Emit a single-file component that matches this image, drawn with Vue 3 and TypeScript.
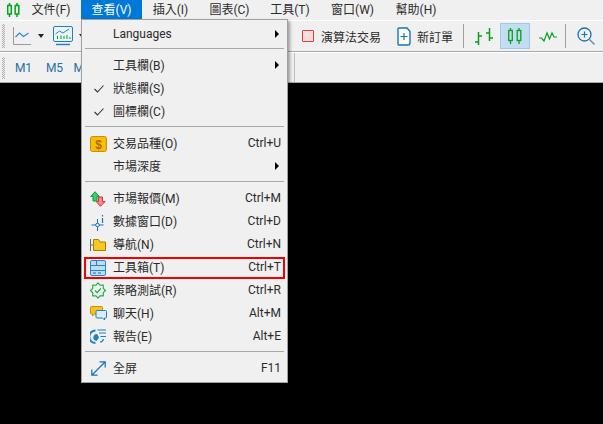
<script setup lang="ts">
type Item = { kind: 'item'; label: string; key?: string; sub?: boolean; check?: boolean; icon?: string; hl?: boolean } | { kind: 'sep' };
const menus = [
  { label: '文件(F)', w: 60 },
  { label: '查看(V)', w: 61, active: true },
  { label: '插入(I)', w: 57 },
  { label: '圖表(C)', w: 61 },
  { label: '工具(T)', w: 60 },
  { label: '窗口(W)', w: 65 },
  { label: '幫助(H)', w: 62 },
];
const items: Item[] = [
  { kind: 'item', label: 'Languages', sub: true },
  { kind: 'sep' },
  { kind: 'item', label: '工具欄(B)', sub: true },
  { kind: 'item', label: '狀態欄(S)', check: true },
  { kind: 'item', label: '圖標欄(C)', check: true },
  { kind: 'sep' },
  { kind: 'item', label: '交易品種(O)', key: 'Ctrl+U', icon: 'dollar' },
  { kind: 'item', label: '市場深度', sub: true },
  { kind: 'sep' },
  { kind: 'item', label: '市場報價(M)', key: 'Ctrl+M', icon: 'quotes' },
  { kind: 'item', label: '數據窗口(D)', key: 'Ctrl+D', icon: 'data' },
  { kind: 'item', label: '導航(N)', key: 'Ctrl+N', icon: 'nav' },
  { kind: 'item', label: '工具箱(T)', key: 'Ctrl+T', icon: 'box', hl: true },
  { kind: 'item', label: '策略測試(R)', key: 'Ctrl+R', icon: 'gear' },
  { kind: 'item', label: '聊天(H)', key: 'Alt+M', icon: 'chat' },
  { kind: 'item', label: '報告(E)', key: 'Alt+E', icon: 'report' },
  { kind: 'sep' },
  { kind: 'item', label: '全屏', key: 'F11', icon: 'full' },
];
</script>

<template>
  <div class="app">
    <div class="menubar">
      <svg class="logo" width="13" height="14" viewBox="0 0 13 14" fill="none" stroke="#00a51a" stroke-width="1.500">
        <path d="M2.500 0v14M10 0v14" />
        <rect x=".700" y="2.500" width="3.600" height="8.500" fill="#f0f0f0" />
        <rect x="8.200" y="2.500" width="3.600" height="8.500" fill="#f0f0f0" />
      </svg>
      <div v-for="m in menus" :key="m.label" class="mb" :class="{ on: m.active }" :style="{ width: m.w + 'px' }">{{ m.label }}</div>
    </div>

    <div class="tb1">
      <div class="grip"></div>
      <svg class="i1" width="18" height="18" viewBox="0 0 18 18" fill="none">
        <path d="M.500 0v17.500H18" stroke="#9a9a9a" />
        <path d="M2.500 10l4-4 4 3.500 5-3.500" stroke="#2a86c8" stroke-width="1.100" />
      </svg>
      <span class="arrow a1"></span>
      <svg class="i2" width="20" height="20" viewBox="0 0 20 20" fill="none">
        <rect x=".500" y=".500" width="19" height="15" rx="1.500" fill="#eaf4fb" stroke="#1e7ec2" />
        <path d="M3 18.500h14" stroke="#1e7ec2" stroke-width="1.400" />
        <path d="M2.500 8l4-3 3.500 2 6-4" stroke="#2a86c8" />
        <path d="M4.500 13v-3M8 13V9.500M11 13v-3M14 13V9M17 13v-2" stroke="#0a9e1e" />
      </svg>
      <span class="arrow a2"></span>
      <div class="tb-sp"></div>
      <span class="redbox"></span>
      <span class="tl t1">演算法交易</span>
      <svg class="i3" width="15" height="19" viewBox="0 0 15 19" fill="none">
        <path d="M1 2a1 1 0 0 1 1-1h8l3 3.500V16a2 2 0 0 1-2 2H2a1 1 0 0 1-1-1z" fill="#fff" stroke="#1673b6" stroke-width="1.400" stroke-linejoin="round" />
        <path d="M7 6v7M3.500 9.500h7" stroke="#1673b6" stroke-width="1.200" />
      </svg>
      <span class="tl t2">新訂單</span>
      <span class="vsep s1"></span>
      <svg class="i4" width="18" height="17" viewBox="0 0 18 17" fill="none" stroke="#0a9e1e" stroke-width="1.500">
        <path d="M3.500 4v13M0 14h3.500M3.500 8H7M14.500 0v13M11 5h3.500M14.500 10H18" />
      </svg>
      <div class="active">
        <svg width="14" height="16" viewBox="0 0 14 16" fill="none" stroke="#0a9e1e" stroke-width="1.300">
          <path d="M2.500 0v16M11 0v16" />
          <rect x=".700" y="2.500" width="3.600" height="10" fill="#c2dcf2" />
          <rect x="9.200" y="2.500" width="3.600" height="10" fill="#c2dcf2" />
        </svg>
      </div>
      <svg class="i5" width="18" height="12" viewBox="0 0 18 12" fill="none" stroke="#0a9e1e" stroke-width="1.200">
        <path d="M0 8h2.500l2.500 3 3-8 2.500 6 2.500-6 2 4H18" />
      </svg>
      <span class="vsep s2"></span>
      <svg class="i6" width="18" height="18" viewBox="0 0 18 18" fill="none" stroke="#1673b6">
        <circle cx="7.500" cy="7.500" r="6.500" stroke-width="1.300" />
        <path d="M7.500 4.500v6M4.500 7.500h6" stroke-width="1.200" />
        <path d="M12.500 12.500L17.500 17.500" stroke="#5c8fb5" stroke-width="1.400" />
      </svg>
    </div>

    <div class="tb2">
      <div class="grip g2"></div>
      <span class="tf">M1</span>
      <span class="tf">M5</span>
      <span class="tf">M15</span>
      <span class="vline"></span>
    </div>

    <div class="canvas"></div>

    <div class="menu">
      <template v-for="(it, i) in items" :key="i">
        <div v-if="it.kind === 'sep'" class="sep"></div>
        <div v-else class="row" :class="{ hl: it.hl, cjk: i > 0 }">
          <span class="ic">
            <svg v-if="it.check" class="chk" width="10" height="8" viewBox="0 0 10 8" fill="none" stroke="#333" stroke-width="1.100"><path d="M.500 4l3 3 6-6.500" /></svg>
            <svg v-else-if="it.icon === 'dollar'" width="17" height="16" viewBox="0 0 17 16">
              <rect x=".500" y=".500" width="16" height="15" rx="2" fill="#f9bd09" stroke="#c98f00" />
              <text x="8.500" y="12.500" text-anchor="middle" font-size="12" font-weight="700" fill="#a96f00" font-family="Liberation Sans">$</text>
            </svg>
            <svg v-else-if="it.icon === 'quotes'" width="16" height="16" viewBox="0 0 16 16" stroke-linejoin="round">
              <path d="M5 .700L9.300 5.500H7V10H3V5.500H.700z" fill="#3ecb6a" stroke="#0e9a3e" />
              <path d="M10.500 15.300L6.200 10.500H8.500V6h4v4.500h2.600z" fill="#f58a8e" stroke="#d8343c" />
            </svg>
            <svg v-else-if="it.icon === 'data'" width="16" height="18" viewBox="0 0 16 18" fill="none">
              <path d="M7.500 6v12M1.500 12h12" stroke="#1673b6" />
              <circle cx="7.500" cy="12" r="1.800" fill="#f0f0f0" stroke="#1673b6" />
              <path d="M12.500 2v1.500M12.500 5v5" stroke="#1673b6" stroke-width="1.200" />
            </svg>
            <svg v-else-if="it.icon === 'nav'" width="16" height="12" viewBox="0 0 16 12" fill="none">
              <path d="M.500 0v12" stroke="#666" />
              <path d="M1 6h2.500" stroke="#666" />
              <path d="M3.500 .500h5l1.500 2.500h5.500v8.500h-12z" fill="#f8c820" stroke="#a87f00" />
            </svg>
            <svg v-else-if="it.icon === 'box'" width="16" height="16" viewBox="0 0 16 16" fill="none">
              <rect x=".500" y=".500" width="15" height="15" rx="1.500" fill="#bcdcf4" stroke="#2a86c8" />
              <path d="M1 5.500h14M1 10.500h14M6.500 1v4.500" stroke="#2a86c8" />
              <path d="M3 13h3M8 13h3" stroke="#1673b6" />
            </svg>
            <svg v-else-if="it.icon === 'gear'" width="16" height="17" viewBox="0 0 17 17" fill="none">
              <path d="M16.500 8.500L14.040 10.800 14.160 14.160 10.800 14.040 8.500 16.500 6.200 14.040 2.840 14.160 2.960 10.800 .500 8.500 2.960 6.200 2.840 2.840 6.200 2.960 8.500 .500 10.800 2.960 14.160 2.840 14.040 6.200z" stroke="#1cab4a" stroke-width="1.200" stroke-linejoin="round" />
              <path d="M5.300 8.500l2.300 2.300 4-4.400" stroke="#1cab4a" stroke-width="1.300" />
            </svg>
            <svg v-else-if="it.icon === 'chat'" width="17" height="15" viewBox="0 0 17 15" fill="none">
              <path d="M1.500 .500h10a1 1 0 0 1 1 1V8h-8l-2 2V8h-1a1 1 0 0 1-1-1V1.500a1 1 0 0 1 1-1z" fill="#f9c21a" stroke="#c99300" />
              <path d="M7 4.500h8.500a1 1 0 0 1 1 1V11a1 1 0 0 1-1 1h-1v2l-2-2H7a1 1 0 0 1-1-1V5.500a1 1 0 0 1 1-1z" fill="#d8ecfa" stroke="#1f80c4" />
            </svg>
            <svg v-else-if="it.icon === 'report'" width="16" height="15" viewBox="0 0 16 15" fill="none" stroke="#1f80c4">
              <path d="M5.500 1.500A6 6 0 0 0 5.500 14" stroke-width="2" />
              <path d="M7 5.500A3 3 0 0 0 6.500 11.500L8.500 8.500z" fill="#1f80c4" />
              <path d="M7.500 1H16M9 4H16M10.500 7.500H16M10 13c1.500 0 3-1 3.500-3" stroke-width="1.100" />
            </svg>
            <svg v-else-if="it.icon === 'full'" class="chk0" width="15" height="15" viewBox="0 0 15 15" fill="none" stroke="#1673b6" stroke-width="1.200">
              <path d="M1 14L14 1M8.500 .800h5.700v5.700M.800 8.500v5.700h5.700" />
            </svg>
          </span>
          <span class="lb">{{ it.label }}</span>
          <span v-if="it.key" class="key">{{ it.key }}</span>
          <span v-if="it.sub" class="subarrow"></span>
        </div>
      </template>
    </div>
  </div>
</template>

<style scoped>
.app {
  position: relative;
  width: 603px;
  height: 424px;
  overflow: hidden;
  background: #000;
  font-family: Roboto, "Noto Sans CJK TC", sans-serif;
  font-size: 12px;
  color: #2b2b2b;
}
.menubar {
  display: flex;
  height: 20px;
  background: #f0f0f0;
  padding-left: 7px;
  align-items: stretch;
}
.logo { margin: 3px 1px 0 0; }
.mb {
  display: flex;
  align-items: center;
  justify-content: center;
  line-height: 20px;
}
.mb.on { background: #0078d7; color: #fff; height: 19px; }
.tb1 {
  display: flex;
  align-items: center;
  height: 30px;
  background: #f0f0f0;
  border-bottom: 1px solid #a8a8a8;
  border-top: 1px solid #fff;
}
.grip {
  width: 3px;
  height: 24px;
  margin-left: 2px;
  margin-right: -1px;
  background: repeating-conic-gradient(#adadad 0 25%, transparent 0 50%) 0 0 / 2px 2px;
}
.g2 { height: 22px; }
.i1 { margin-left: 9px; }
.arrow { width: 0; height: 0; border-left: 3.500px solid transparent; border-right: 3.500px solid transparent; border-top: 4px solid #222; }
.a1 { margin-left: 7px; }
.i2 { margin-left: 9px; }
.a2 { margin-left: 6px; }
.tb-sp { flex: 1; }
.vsep { width: 1px; height: 24px; background: #a0a0a0; }
.redbox { width: 10px; height: 10px; background: #fbdcdc; border: 1px solid #d84040; border-radius: 1px; }
.t1 { margin-left: 7px; }
.i3 { margin-left: 16px; }
.t2 { margin-left: 5px; }
.s1 { margin-left: 10px; }
.i4 { margin-left: 11px; }
.active {
  width: 28px;
  height: 24px;
  margin-left: 7px;
  background: #c2dcf2;
  border: 1px solid #9ec9ec;
  display: flex;
  align-items: center;
  justify-content: center;
}
.i5 { margin-left: 9px; }
.s2 { margin-left: 8px; }
.i6 { margin-left: 11px; margin-right: 8px; }
.tb2 {
  display: flex;
  align-items: center;
  height: 29px;
  background: #f0f0f0;
  border-bottom: 1px solid #a8a8a8;
  border-top: 1px solid #fff;
}
.tf { color: #1f6fa8; width: 31px; text-align: center; font-size: 12px; }
.tb2 .tf:first-of-type { margin-left: 4px; }
.vline { width: 1px; height: 29px; background: #c0c0c0; margin-left: 193px; }
.canvas { height: 341px; background: #000; }
.menu {
  position: absolute;
  left: 81px;
  top: 19px;
  width: 207px;
  box-sizing: border-box;
  background: #f0f0f0;
  border: 1px solid #a0a0a0;
  padding: 2px;
  box-shadow: 2px 2px 3px rgba(0, 0, 0, 0.35);
}
.sep { height: 9px; position: relative; }
.sep::before { content: ""; position: absolute; left: 1px; right: 1px; top: 3px; height: 1px; background: #a8a8a8; }
.row {
  position: relative;
  display: flex;
  align-items: center;
  height: 23px;
  box-sizing: border-box;
  padding-left: 29px;
}
.row.cjk { padding-bottom: 2px; }
.row.hl::after {
  content: "";
  position: absolute;
  left: 0;
  right: 0;
  top: 1px;
  bottom: 0;
  border: 2px solid #f00000;
  pointer-events: none;
}
.ic {
  position: absolute;
  left: 6px;
  top: 0;
  width: 20px;
  height: 23px;
  display: flex;
  align-items: center;
}
.chk { margin-left: 4px; }
.chk0 { margin-left: 1px; }
.lb { flex: 1; white-space: nowrap; }
.key { margin-right: 4px; }
.subarrow {
  width: 0;
  height: 0;
  margin-right: 6px;
  border-top: 4px solid transparent;
  border-bottom: 4px solid transparent;
  border-left: 4px solid #000;
}
</style>
